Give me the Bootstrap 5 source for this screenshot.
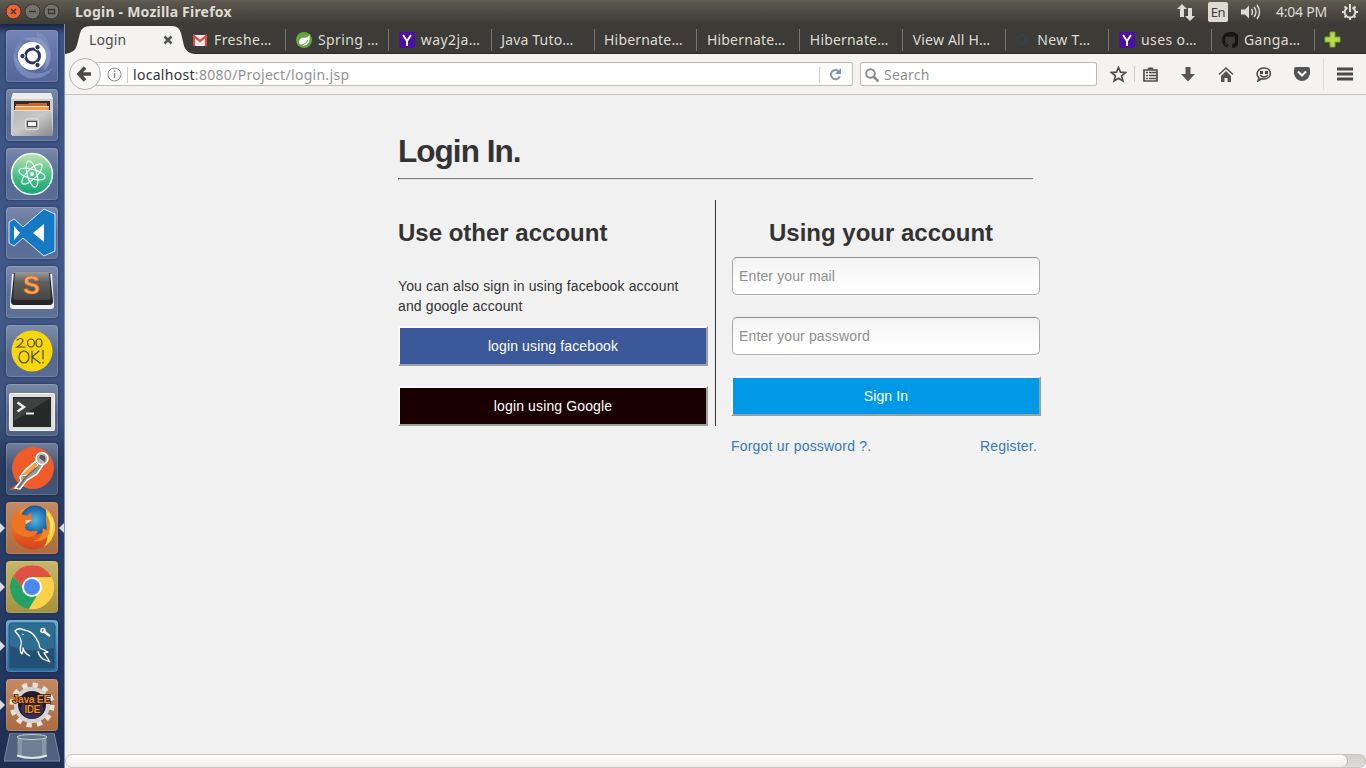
<!DOCTYPE html>
<html lang="en">
<head>
<meta charset="utf-8">
<title>Login - Mozilla Firefox</title>
<link href="https://cdn.jsdelivr.net/npm/bootstrap@5.3.0/dist/css/bootstrap.min.css" rel="stylesheet">
<script src="https://cdn.jsdelivr.net/npm/bootstrap@5.3.0/dist/js/bootstrap.bundle.min.js"></script>
<style>
body{font:14px/20px "Noto Sans",sans-serif;background:#f1f1f1;height:768px;width:1366px;overflow:hidden}
svg{display:block;flex:none}
.topbar{height:24px;background:linear-gradient(#615f50 0,#5a584e 2px,#3d3c38 23px);color:#dfdbd2;padding-left:5px;padding-right:7px}
.win-title{font-weight:700;font-size:14px;letter-spacing:.21px;margin-left:15px;line-height:24px}
.lang{width:20px;height:20px;background:#dfdbd2;color:#3c3b37;border-radius:2px;font-size:13px;line-height:20px;text-align:center;letter-spacing:-.4px}
.clock{width:54px;font-size:14px;letter-spacing:-.22px;white-space:nowrap}
.launcher{width:65px;padding:6px 0 0 6px;gap:7px;background:linear-gradient(#17233f 0,#3c5280 10px,#3f5586 170px,#435a88 290px,#3a4f78 400px,#26395d 440px,#283d66 560px,#233660 650px,#1e2e50);border-right:1px solid #7d92af}
.tile{width:52px;height:52px;border-radius:4px;position:relative;flex:none;background:linear-gradient(#ffffff50,#ffffff1f 55%,#ffffff24);box-shadow:inset 0 0 0 1px #ffffff24,0 0 3px #0b183799}
.tile.dash{background:linear-gradient(#7283b4,#53659b)}
.tile.warm{background:linear-gradient(#c58a64,#ac6b40)}
.tile.gold{background:linear-gradient(#c9b56a,#a39141)}
.tile.sea{background:linear-gradient(#6aa5cb,#2c6da6)}
.pip{position:absolute;left:-6px;top:21px}
.pip-r{position:absolute;right:-6px;top:21px}
.tabstrip{height:30px;background:#3c3b37;color:#dfdbd2;border-bottom:1px solid #2b2a27}
.first-tab{width:118px;padding-left:24px;position:relative;color:#4c4c4c;flex:none}
.tab-shape{position:absolute;left:0;top:0}
.first-tab span,.first-tab .x{position:relative;top:1px}
.btab{width:102.9px;padding-left:10px;gap:6px;position:relative;flex:none;white-space:nowrap;height:30px;padding-top:2px}
.btab:after{content:"";position:absolute;right:0;top:5px;height:22px;width:1px;background:#777570}
.btab span,.first-tab span{line-height:28px}
.btab span{letter-spacing:.18px;margin-left:-.5px}
.btab svg+span{letter-spacing:.4px;margin-left:0}
.first-tab span{letter-spacing:.1px}
.toolbar{height:41px;background:#f4f3f1;border-bottom:1px solid #c4c2be}
.back{width:32px;height:32px;border:1px solid #b4b2ae;border-radius:50%;background:#f6f5f4;z-index:2;margin-left:4px;flex:none}
.field{height:24px;background:#fff;border:1px solid #bdbbb7;border-radius:2px;flex:none;padding-top:1px}
.addr{width:758px;margin-left:-6px;padding-left:11px}
.find{width:237px;margin-left:7px;padding-left:4px;color:#8e8e8e}
.vline{width:1px;background:#d0cecb;height:16px;flex:none}
.tool{width:38px;flex:none}
.page{font-family:"Liberation Sans",Arial,sans-serif;color:#333;width:635px;height:659px;letter-spacing:.13px}
.page h1{font-size:31.5px;letter-spacing:-.95px;line-height:33px;font-weight:700;padding-top:40px;margin:0 0 10px}
.rule{border-top:1px solid #808080;border-bottom:1px solid #e3e3e3;border-left:1px solid #555;height:2px;margin-bottom:20px}
.half-l{width:318px;height:226px;border-right:1px solid #333;flex:none}
.half-r{width:310px;margin-left:15px;flex:none}
.page h2{font-size:24px;letter-spacing:0;line-height:26px;font-weight:700;padding-top:20px;margin:0}
.act{width:310px;height:40px;border:2px solid;border-color:#fbfbfb #a09f9f #a09f9f #fbfbfb;border-radius:0;color:#fff;font-size:14px;letter-spacing:.13px;padding:0;display:block}
.fb{background:#3b5998}.gg{background:#1b0000}.si{background:#0099e8}
.entry{width:308px;height:38px;margin-left:1px;border:1px solid #aaa;border-top-color:#8e8e8e;border-radius:5px;font-size:14px;letter-spacing:.13px;padding:0 6px;background:linear-gradient(#f3f3f3,#fff 85%);box-shadow:0 1px 0 #fafafa;display:block}
.entry::placeholder{color:#8f8f8f;opacity:1}
.page a{color:#337ab7;text-decoration:none;letter-spacing:.2px}
.hscroll{height:14px;background:linear-gradient(#cfcfcf,#dedede);border:1px solid #c9c4ba;border-radius:7px}
.thumb{width:1282px;height:12px;border-radius:6px;background:linear-gradient(#fff,#eeedeb);border-right:1px solid #b9b6b1}
</style>
</head>
<body>
<header class="topbar d-flex align-items-center">
 <svg width="55" height="24"><g stroke="#34332e"><circle cx="8.500" cy="11.500" r="7.500" fill="#ed6435"/><circle cx="27.500" cy="11.500" r="7.500" fill="#74736b"/><circle cx="46.500" cy="11.500" r="7.500" fill="#74736b"/></g><path d="M6 9l5 5M11 9l-5 5M24 11.500h7M43.500 9.500h6v4h-6z" fill="none" stroke="#34332e" stroke-width="1.300"/></svg>
 <span class="win-title">Login - Mozilla Firefox</span>
 <div class="ms-auto d-flex align-items-center">
  <svg width="18" height="18" fill="#dfdbd2" style="margin-right:13px"><path d="M5 1l5 5H7v8H3V6H0zM13 18l-5-5h3V5h4v8h3z"/></svg>
  <span class="lang" style="margin-right:12px">En</span>
  <svg width="22" height="18" style="margin-right:14px"><path d="M1 6.500h4l4-4v13l-4-4H1z" fill="#dfdbd2"/><path d="M11.500 6q2 3 0 6M14 4q4 5 0 10M17 2q5 7 0 14" fill="none" stroke="#dfdbd2" stroke-width="1.400"/></svg>
  <span class="clock" style="margin-right:11px">4:04 PM</span>
  <svg width="18" height="18" fill="none" stroke="#dfdbd2"><path d="M6.500 4.500a5.300 5.300 0 1 0 5 0M9 1v8" stroke-width="2"/><path d="M3.500 3.500l2 2M14.500 3.500l-2 2M1 9h3M14 9h3M3.500 14.500l2-2M14.500 14.500l-2-2M9 14v3" stroke-width="2"/></svg>
 </div>
</header>
<div class="d-flex" style="height:744px">
 <aside class="launcher d-flex flex-column flex-shrink-0">
  <div class="tile dash"><svg width="52" height="52"><path d="M16 9Q38 2 44 22Q46 34 37 41Q43 30 37 20Q30 10 16 9zM8 22Q6 42 22 48Q38 51 47 38Q36 46 24 42Q12 38 8 22z" fill="#aab6d8" opacity=".4"/><path d="M16 9Q8 16 8 26Q10 36 18 40L12 26zM30 1Q44 6 45 24Q45 36 38 40" fill="#93a2cc" opacity=".35"/><circle cx="26" cy="26" r="14" fill="#fff"/><circle cx="26.500" cy="26" r="7" fill="none" stroke="#2b3560" stroke-width="3"/><g fill="#2b3560" stroke="#fff"><circle cx="16.500" cy="26" r="2.700"/><circle cx="31.500" cy="17.200" r="2.700"/><circle cx="31.500" cy="35" r="2.700"/></g></svg></div>
  <div class="tile"><svg width="52" height="52"><defs><linearGradient id="cab" x2="1" y2="1"><stop stop-color="#b5b5b5"/><stop offset=".45" stop-color="#c9c9c9"/><stop offset="1" stop-color="#888"/></linearGradient></defs><path d="M7 4h38l2 7v35H5V11z" fill="#cfcfcf"/><path d="M7 4h38l2 6H5z" fill="#ececec"/><path d="M8 12h36v12H8z" fill="#302c2a"/><path d="M10 15h12l1-1h18v8H10z" fill="#d7602c"/><path d="M9 17h34v1H9z" fill="#ffe3bd"/><path d="M9 18h34v5H9z" fill="#ee9d52"/><path d="M8 21h37l2 26H6z" fill="url(#cab)"/><path d="M8 21.500h37" stroke="#dedede"/><rect x="19.500" y="30" width="13" height="10.500" rx="2" fill="#b2b2b2" stroke="#e8e8e8"/><rect x="21.500" y="32.500" width="9" height="5" fill="#f3f3f3" stroke="#444"/></svg></div>
  <div class="tile"><svg width="52" height="52"><defs><linearGradient id="atomg" x2="0" y2="1"><stop stop-color="#c2e2ab"/><stop offset=".55" stop-color="#49bf8b"/><stop offset="1" stop-color="#15a474"/></linearGradient></defs><circle cx="26" cy="26" r="20.500" fill="url(#atomg)" stroke="#f6fff8" stroke-width="1.500"/><g fill="none" stroke="#effff7" stroke-width="1.200"><ellipse cx="26" cy="26" rx="13.500" ry="4.800" transform="rotate(15 26 26)"/><ellipse cx="26" cy="26" rx="13.500" ry="4.800" transform="rotate(75 26 26)"/><ellipse cx="26" cy="26" rx="13.500" ry="4.800" transform="rotate(135 26 26)"/></g><circle cx="26" cy="26" r="2" fill="#fff"/></svg></div>
  <div class="tile"><svg width="52" height="52"><path d="M38 2l11 5v37l-11 5L17 31 8 39l-5-3V15l5-3 9 8z" fill="#1679c4" stroke="#d8e8f5"/><path d="M38 17v18L27 26zM8 19l6 7-6 7z" fill="#fff"/></svg></div>
  <div class="tile"><svg width="52" height="52"><defs><linearGradient id="subg" x2="0" y2="1"><stop stop-color="#9a9a9a"/><stop offset=".35" stop-color="#606060"/><stop offset="1" stop-color="#444"/></linearGradient></defs><path d="M6 8h40l2 32q0 3-3 3H7q-3 0-3-3z" fill="#f3f3f3"/><path d="M8 7h36l3 28q0 4-3 4H8q-3 0-3-4z" fill="#252525"/><path d="M9 6h34l2 25q0 3-3 3H10q-3 0-3-3z" fill="url(#subg)"/><text x="17" y="28" font-family="Liberation Sans" font-weight="700" font-size="25" fill="#ffa34d" stroke="#cf641b" stroke-width=".5">S</text></svg></div>
  <div class="tile"><svg width="52" height="52"><circle cx="26" cy="26" r="20.500" fill="#f8d80c"/><path d="M7 19h37M6 27h40M10 36h32M17 8l18 35M34 8L15 43" stroke="#efc500" opacity=".35"/><g fill="none" stroke="#4e4920" stroke-width="1.200" stroke-linecap="round"><path d="M11 15q4-3 6 0q0 3-6 7h8"/><ellipse cx="25" cy="18" rx="3.500" ry="4"/><ellipse cx="33" cy="18" rx="3" ry="4"/><ellipse cx="18" cy="32" rx="5" ry="6"/><path d="M26 26v12M33 26l-7 6 8 6M37 25v9M37 37v1"/></g></svg></div>
  <div class="tile"><svg width="52" height="52"><rect x="3.500" y="9.500" width="45" height="37" rx="1" fill="#ddd" stroke="#f8f8f8"/><path d="M7 13h38v30H7z" fill="#282a2a"/><path d="M8 14h36L8 37z" fill="#4b4e4d" opacity=".65"/><path d="M11.500 18.500l6.500 4.500-6.500 4.500" fill="none" stroke="#eee" stroke-width="2.400"/><path d="M20 29.500h8" stroke="#eee" stroke-width="2"/></svg></div>
  <div class="tile"><svg width="52" height="52"><circle cx="27" cy="25" r="21" fill="#f05b2b"/><path d="M3 47l7-5 3 4z" fill="#e95527"/><path d="M31 17L19 27l-5 7 1 4-6 7 5 1 7-9 10-6 6-9z" fill="#9d9a92" stroke="#fff" stroke-width="1.500"/><path d="M29 19L14 33l8-1 10-10z" fill="#f5a33a" stroke="#fff"/><path d="M31 24L20 34l-8 11" fill="none" stroke="#666" stroke-width="1.500"/><circle cx="36" cy="15.500" r="6" fill="#b6b5b1" stroke="#fff" stroke-width="1.500"/><path d="M34 12q7-1 5 7l-6-4z" fill="#555"/></svg></div>
  <div class="tile warm"><svg width="52" height="52"><defs><radialGradient id="foxb"><stop stop-color="#4fbbe4"/><stop offset="1" stop-color="#1a559f"/></radialGradient><linearGradient id="foxo" x2="0" y2="1"><stop stop-color="#f79a2a"/><stop offset=".5" stop-color="#ee6a20"/><stop offset="1" stop-color="#d4421e"/></linearGradient></defs><circle cx="27" cy="26" r="21.500" fill="url(#foxo)"/><circle cx="29" cy="18" r="14.500" fill="url(#foxb)"/><path d="M40 7q10 8 9 21-2 11-11 17 5-8 3-18z" fill="#ffce3c"/><path d="M40 12q6 8 3 20-6 9-16 7 10-2 10-13l4 3z" fill="#f0861f"/><path d="M42 12q5 8 3 17M46 16q2 8-2 18" fill="none" stroke="#fff07a" stroke-width="1.300"/><path d="M5 22Q7 11 13 8l1 5q4-1 7 1 2-3 5-3-2 3 0 5 1 2 0 3l-6 3-1 4q3 4 8 3 4-1 5 1-4 5-10 5Q8 34 5 22z" fill="#ed7420"/><path d="M19 18h7l-6 4z" fill="#fff1d8" opacity=".75"/></svg><svg class="pip" width="6" height="10"><path d="M0 0l5 5-5 5z" fill="#d8dbe0"/></svg><svg class="pip-r" width="6" height="10"><path d="M6 0L1 5l5 5z" fill="#d8dbe0"/></svg></div>
  <div class="tile gold"><svg width="52" height="52"><circle cx="26" cy="26" r="22" fill="#fcd047"/><path d="M26 26H16L7 15A22 22 0 0 1 45.500 16H26z" fill="#df5144"/><path d="M7 15a22 22 0 0 0 16 33l9-15-6-7H16z" fill="#25a163"/><path d="M32 33L23 48A22 22 0 0 0 45.500 16H30z" fill="#fcd047"/><circle cx="26" cy="26" r="10" fill="#fff"/><circle cx="26" cy="26" r="8" fill="#4b88ef"/></svg><svg class="pip" width="6" height="10"><path d="M0 0l5 5-5 5z" fill="#d8dbe0"/></svg></div>
  <div class="tile sea"><svg width="52" height="52"><rect x="3" y="3" width="46" height="46" rx="3" fill="#2f6c92" stroke="#1d5a83"/><path d="M4 26q22 8 44 2v20H4z" fill="#1d4669" opacity=".7"/><path d="M24 36q-6-3-7-8 0 4-1 6-3-3-1-9 1-4-2-9L9 11q3-4 9-1 8 1 12 8 3 4 4 10l8 4-4 1 6 9-7-3q-4-3-5-8" fill="none" stroke="#fff" stroke-width="1.300" stroke-linejoin="round"/><path d="M37 11l7 5" stroke="#fff" stroke-width="2.200"/><circle cx="37" cy="10.500" r="2" fill="none" stroke="#fff" stroke-width="1.500"/><circle cx="17" cy="14.500" r=".8" fill="#fff"/></svg><svg class="pip" width="6" height="10"><path d="M0 0l5 5-5 5z" fill="#d8dbe0"/></svg></div>
  <div class="tile warm"><svg width="52" height="52"><circle cx="26" cy="26" r="20" fill="none" stroke="#e4e2de" stroke-width="5" stroke-dasharray="5.230 5.240"/><circle cx="26" cy="26" r="16" fill="#211d2b" stroke="#d5d3d1" stroke-width="4"/><circle cx="26" cy="29" r="11" fill="#3b2f5a"/><g font-family="Liberation Sans" font-size="10.500" font-weight="700" fill="#f28a2e" stroke="#211812" stroke-width="1.500" paint-order="stroke"><text x="6.500" y="24" textLength="38">Java EE</text><text x="18.500" y="34" textLength="16">IDE</text></g></svg><svg class="pip" width="6" height="10"><path d="M0 0l5 5-5 5z" fill="#d8dbe0"/></svg></div>
  <svg width="56" height="29" style="margin:-5px 0 0 -2px"><path d="M6 0h44l6 28H0z" fill="#4f6180" stroke="#7d8ba1"/><path d="M13 3v20q15 6 30 0V3z" fill="#6f7e92"/><path d="M14 3h4v21h-4zM38 3h4v21h-4z" fill="#a9b4be" opacity=".45"/><ellipse cx="28" cy="4" rx="15" ry="2.500" fill="#66758a" stroke="#c5ccd0"/><path d="M13 22.500q15 5 30 0" fill="none" stroke="#e4e7e8" stroke-width="2"/></svg>
 </aside>
 <main class="d-flex flex-column flex-grow-1" style="min-width:0">
  <nav class="tabstrip d-flex">
   <div class="first-tab d-flex align-items-center"><svg class="tab-shape" width="132" height="30"><path d="M0 30q10-1 12-9L15 9q2-7 10-7h82q7 0 9 7l3 13q2 7 11 8z" fill="#f4f3f1"/></svg><span>Login</span><svg class="x" width="10" height="10" style="margin-left:37px"><path d="M1.500 1.500l7 7M8.500 1.500l-7 7" stroke="#555" stroke-width="2.600"/></svg></div>
   <div class="btab d-flex align-items-center"><svg width="15" height="16"><path d="M0 3h14v11H0z" fill="#ececec"/><path d="M1 14V4l6 5 6-5v10" fill="none" stroke="#d84b3e" stroke-width="2.200"/></svg><span>Freshe…</span></div>
   <div class="btab d-flex align-items-center"><svg width="16" height="16"><circle cx="8" cy="8" r="8" fill="#65a63b"/><path d="M13.500 2q1.500 11-5.500 11.500-5 0-5-4 0-4 7-4 3-.5 3.500-3.500" fill="#fff"/><path d="M2 13q7 1 10-5" fill="none" stroke="#65a63b"/></svg><span>Spring …</span></div>
   <div class="btab d-flex align-items-center"><svg width="16" height="16"><path d="M0 0h16v16H0z" fill="#4b10a0"/><path d="M4 3l4 6 4-6M8 8v6" fill="none" stroke="#fff" stroke-width="1.900"/></svg><span>way2ja…</span></div>
   <div class="btab d-flex align-items-center"><span>Java Tuto…</span></div>
   <div class="btab d-flex align-items-center"><span>Hibernate…</span></div>
   <div class="btab d-flex align-items-center"><span>Hibernate…</span></div>
   <div class="btab d-flex align-items-center"><span>Hibernate…</span></div>
   <div class="btab d-flex align-items-center"><span>View All H…</span></div>
   <div class="btab d-flex align-items-center"><svg width="15" height="16" fill="none" stroke="#2f475a" stroke-width="1.300"><circle cx="6" cy="7.500" r="4.300"/><path d="M9.500 11l3 2"/></svg><span>New T…</span></div>
   <div class="btab d-flex align-items-center"><svg width="16" height="16"><path d="M0 0h16v16H0z" fill="#4b10a0"/><path d="M4 3l4 6 4-6M8 8v6" fill="none" stroke="#fff" stroke-width="1.900"/></svg><span>uses o…</span></div>
   <div class="btab d-flex align-items-center"><svg width="16" height="16" viewBox="0 0 16 16"><path fill="#151514" d="M8 0C3.580 0 0 3.580 0 8c0 3.540 2.290 6.530 5.470 7.590.4.070.55-.17.55-.38v-1.490c-2 .37-2.530-.49-2.690-.94-.5-1-.9-1.200-.9-1.500 1-.2 1.700 1 2 1.500.6.800 1.400.7 1.900.5.100-.5.300-.8.500-1-1.800-.2-3.700-1-3.700-4 0-.9.300-1.600.8-2.100-.1-.3-.4-1.100.1-2.100 0 0 .7-.2 2.200.8a7.500 7.500 0 0 1 4 0c1.500-1 2.200-.8 2.200-.8.500 1 .2 1.800.1 2.100.5.500.8 1.200.8 2.100 0 3-1.900 3.800-3.700 4 .3.200.6.800.6 1.500v2.100c0 .2.100.5.500.4A8 8 0 0 0 8 0"/></svg><span>Ganga…</span></div>
   <svg width="17" height="17" style="margin:7px 0 0 9px"><path d="M6 1h5v5h5v5h-5v5H6v-5H1V6h5z" fill="#b5d84d" stroke="#7da32a"/></svg>
  </nav>
  <div class="toolbar d-flex align-items-center">
   <div class="back d-flex align-items-center justify-content-center"><svg width="16" height="16"><path d="M8 1.500L2 8l6 6.500M2.500 8H14" fill="none" stroke="#4b4b4b" stroke-width="3.500"/></svg></div>
   <div class="field addr d-flex align-items-center">
    <svg width="15" height="15" fill="none" stroke="#8b8b8b"><circle cx="7.500" cy="7.500" r="6.500"/><path d="M7.500 6v5M7.500 3.500v1.500" stroke-width="1.600"/></svg><span class="vline" style="margin:0 5px 0 5px"></span>
    <span style="color:#929292;letter-spacing:.3px"><span style="color:#333">localhost</span>:8080/Project/login.jsp</span>
    <span class="vline ms-auto"></span><svg width="13" height="13" style="margin:0 10px 0 9px"><path d="M10 3.500a4.600 4.600 0 1 0 .7 5" fill="none" stroke="#8496a8" stroke-width="2"/><path d="M12 0v6H6z" fill="#8496a8"/></svg>
   </div>
   <div class="field find d-flex align-items-center"><svg width="14" height="14" fill="none" stroke="#8c8c8c" stroke-width="2"><circle cx="5.500" cy="5.500" r="4.300"/><path d="M8.500 8.500l5 5" stroke-width="2.500"/></svg><span style="margin-left:5px;letter-spacing:.2px">Search</span></div>
   <svg width="17" height="17" viewBox="0 0 17 17" style="margin:0 7px 0 13px"><path d="M8.500 1.500l2 4.700 5.100.4-4 3.300 1.300 5.100-4.400-2.800L4.100 15l1.300-5.100-4-3.300 5.100-.4z" fill="none" stroke="#4e4e4e" stroke-width="1.700"/></svg>
   <span class="vline"></span>
   <div class="tool d-flex justify-content-center" style="margin-left:-4px"><svg width="15" height="15"><path d="M1 3h13v11H1z" fill="#f4f4f4" stroke="#4c4c4c" stroke-width="1.700"/><path d="M4 2.500L5.500.5h4L11 2.500z" fill="#4c4c4c"/><path d="M3 5.500h2M6 5.500h7M3 8.500h2M6 8.500h7M3 11.500h2M6 11.500h7" stroke="#4c4c4c" stroke-width="1.400"/></svg></div>
   <div class="tool d-flex justify-content-center"><svg width="16" height="15"><path d="M5.500 0h5v7H15l-7 7.500L1 7h4.500z" fill="#555"/></svg></div>
   <div class="tool d-flex justify-content-center"><svg width="16" height="15"><path d="M1 7.500L8 1l7 6.500" fill="none" stroke="#505050" stroke-width="1.500"/><path d="M3 9l5-5 5 5v6H9.500v-4h-3v4H3z" fill="#555"/></svg></div>
   <div class="tool d-flex justify-content-center"><svg width="16" height="15"><path d="M8 1c8.500 0 8.500 11 0 11l-3-.2L2 14l1-3C-1 7 2 1 8 1z" fill="#eee" stroke="#4b4b4b" stroke-width="1.600"/><path d="M4 4h3v3H4zM9 4h3v3H9z" fill="#444"/><path d="M4 8q4 4 8 0" fill="none" stroke="#444" stroke-width="1.300"/></svg></div>
   <div class="tool d-flex justify-content-center"><svg width="16" height="14"><path d="M2 0h12q2 0 2 2v5q-2 7-8 7T0 7V2q0-2 2-2" fill="#555"/><path d="M4 4.500l4 4 4-4" fill="none" stroke="#fff" stroke-width="2"/></svg></div>
   <span class="vline" style="height:32px;margin:0 13px 0 2px;background:#dddbd8"></span>
   <svg width="16" height="14"><path d="M0 2h16M0 7h16M0 12h16" stroke="#494949" stroke-width="2.800"/></svg>
  </div>
  <section class="page mx-auto">
   <h1>Login In.</h1>
   <div class="rule"></div>
   <div class="d-flex">
    <div class="half-l">
     <h2>Use other account</h2>
     <p style="margin:30px 0 10px;width:300px">You can also sign in using facebook account and google account</p>
     <button class="btn act fb" style="margin-bottom:20px">login using facebook</button>
     <button class="btn act gg">login using Google</button>
    </div>
    <form class="half-r">
     <h2 style="padding-left:38px;margin-bottom:11px">Using your account</h2>
     <input class="entry" type="email" placeholder="Enter your mail">
     <input class="entry" type="password" placeholder="Enter your password" style="margin-top:22px;margin-bottom:21px">
     <button type="button" class="btn act si">Sign In</button>
     <div class="d-flex justify-content-between" style="padding:20px 4px 0 0"><a href="#">Forgot ur possword ?.</a><a href="#">Register.</a></div>
    </form>
   </div>
  </section>
  <div class="hscroll flex-shrink-0"><div class="thumb"></div></div>
 </main>
</div>
</body>
</html>
